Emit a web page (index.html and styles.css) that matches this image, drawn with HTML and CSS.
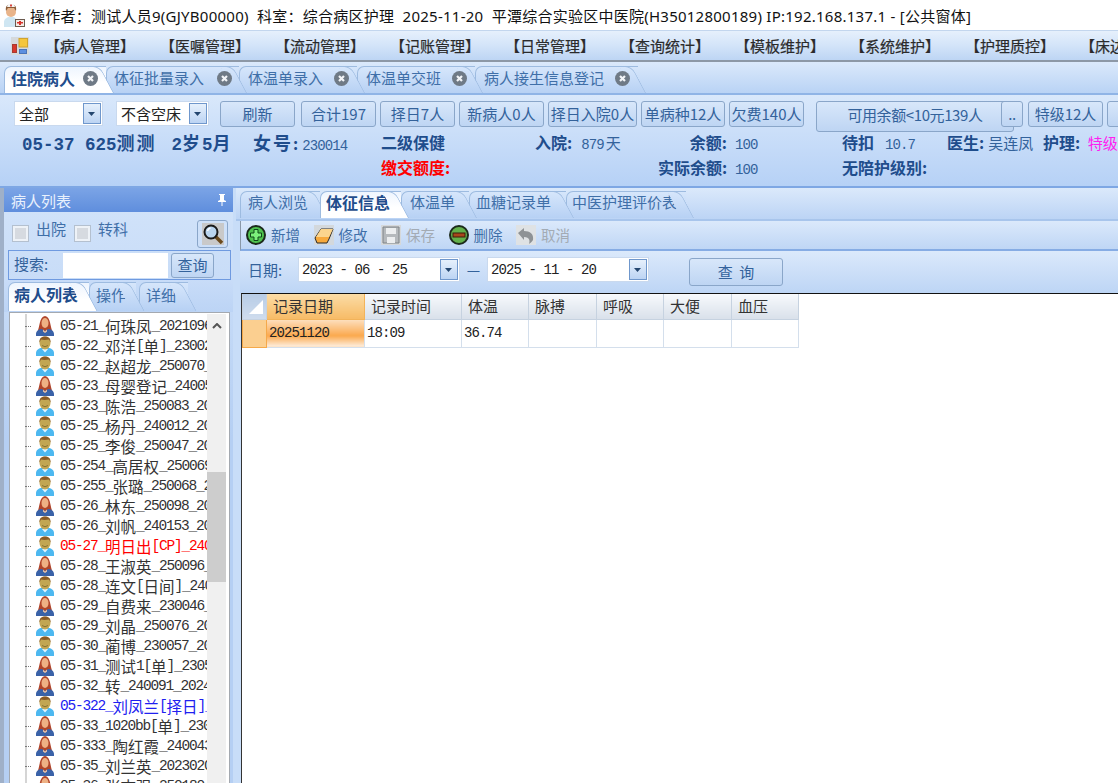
FILE: index.html
```html
<!DOCTYPE html>
<html lang="zh-CN">
<head>
  <meta charset="UTF-8">
  <title>公共窗体</title>
  <link rel="stylesheet" href="styles.css">
</head>
<body>
  <svg class="defs" width="0" height="0">
    <symbol id="male" viewBox="0 0 18 20">
      <path d="M0 20v-3c0-3 3-5 6-5h6c3 0 6 2 6 5v3z" fill="#4db8f0"/>
      <path d="M6 13l3 3.500 3-3.500z" fill="#e6f6ff"/>
      <ellipse cx="9" cy="7" rx="5.500" ry="6.500" fill="#c2a652"/>
      <path d="M3.500 6.500C3 2 6 .5 9 .5s6 1.500 5.500 6L13 3.500C10 4 7 4 5 3.500z" fill="#8a5a24"/>
      <path d="M6 9.500q3 2.500 6 0" stroke="#8a7430" fill="none"/>
    </symbol>
    <symbol id="female" viewBox="0 0 18 20">
      <path d="M1.500 15.500C4 11 3 1 9 0c6 1 5 11 7.500 15.500z" fill="#b0452a"/>
      <ellipse cx="9" cy="7" rx="3.500" ry="5" fill="#eeb184"/>
      <path d="M0 20v-2c0-3 3-5 6-5l3 2 3-2c3 0 6 2 6 5v2z" fill="#3a62a8"/>
      <path d="M7 13.500l2 2 2-2v2l-2 1.500-2-1.500z" fill="#f3c7a4"/>
    </symbol>
    <symbol id="close" viewBox="0 0 15 15">
      <circle cx="7.500" cy="7.500" r="7.500" fill="#6f7a86"/>
      <path d="M5 5l5 5M10 5l-5 5" stroke="#f2f4f7" stroke-width="2.200"/>
    </symbol>
    <symbol id="caret" viewBox="0 0 8 4">
      <path d="M0 0h7L3.500 4z" fill="#24466f"/>
    </symbol>
  </svg>

  <div class="titlebar">
    <svg class="nurse" viewBox="0 0 22 24" width="22" height="24">
      <path d="M1 24v-5c0-3 3-5 6-5h2c3 0 5 2 5 5v5z" fill="#cfe6f2"/>
      <circle cx="8" cy="9" r="5" fill="#e9b48a"/>
      <path d="M3 8C2 3 5 1 8 1s6 2 5 7L11 5H5z" fill="#8a5b36"/>
      <path d="M4 4l1-3h6l1 3z" fill="#f5f5f5"/>
      <rect x="7" y="1.500" width="2" height="2" fill="#d8443c"/>
      <rect x="12" y="16" width="10" height="8" fill="#6b5a4e"/>
      <rect x="13" y="17" width="8" height="6" fill="#f3ece4"/>
      <path d="M16 18h2v1h2v1.500h-2v1.500h-2v-1.500h-2V19h2z" fill="#d8322c"/>
    </svg>
    <span>操作者：测试人员9(GJYB00000)&nbsp; 科室：综合病区护理&nbsp; 2025-11-20&nbsp; 平潭综合实验区中医院(H35012800189) IP:192.168.137.1 - [公共窗体]</span>
  </div>

  <div class="menubar">
    <svg class="menu-logo" viewBox="0 0 18 18" width="18" height="18">
      <rect width="18" height="18" fill="#d5d9dc"/>
      <rect x="8" y="1.500" width="8.500" height="8.500" fill="#f5c63c" stroke="#d0a430"/>
      <rect x="1.500" y="7.500" width="4" height="8" fill="#d8382c" stroke="#a83a30"/>
      <rect x="8.500" y="12.500" width="7" height="4" fill="#5c8fe0" stroke="#4a74b8"/>
    </svg>
    <a class="menu-item">【病人管理】</a>
    <a class="menu-item">【医嘱管理】</a>
    <a class="menu-item">【流动管理】</a>
    <a class="menu-item">【记账管理】</a>
    <a class="menu-item">【日常管理】</a>
    <a class="menu-item">【查询统计】</a>
    <a class="menu-item">【模板维护】</a>
    <a class="menu-item">【系统维护】</a>
    <a class="menu-item">【护理质控】</a>
    <a class="menu-item">【床边</a>
  </div>

  <div class="page-tabs">
    <div class="tab tab-on w1">住院病人<svg class="tab-close"><use href="#close"/></svg></div>
    <div class="tab w2">体征批量录入<svg class="tab-close"><use href="#close"/></svg></div>
    <div class="tab w3">体温单录入<svg class="tab-close"><use href="#close"/></svg></div>
    <div class="tab w3">体温单交班<svg class="tab-close"><use href="#close"/></svg></div>
    <div class="tab">病人接生信息登记<svg class="tab-close"><use href="#close"/></svg></div>
  </div>

  <div class="patient-panel">
    <div class="filter-row">
      <div class="combo combo-a">全部<span class="combo-btn"><svg><use href="#caret"/></svg></span></div>
      <div class="combo combo-b">不含空床<span class="combo-btn"><svg><use href="#caret"/></svg></span></div>
      <button class="btn b-75 first">刷新</button>
      <button class="btn b-75 wide-gap">合计197</button>
      <button class="btn b-75">择日7人</button>
      <button class="btn b-85">新病人0人</button>
      <button class="btn b-89">择日入院0人</button>
      <button class="btn b-84">单病种12人</button>
      <button class="btn b-75">欠费140人</button>
      <button class="btn btn-tall">可用余额&lt;10元139人<span class="btn btn-more">..</span></button>
      <button class="btn b-75 after-more">特级12人</button>
      <button class="btn b-75"></button>
    </div>
    <div class="info-row">
      <div class="c1 big">05-37 625<span class="big-cn">测测</span><span class="age">2<span class="big-cn">岁</span>5<span class="big-cn">月</span></span></div>
      <div class="c1b"><b class="big-cn">女</b><b class="big-cn">号</b><b>:</b><span class="val">230014</span></div>
      <div class="c2"><b>二级保健</b></div>
      <div class="c3"><b>入院</b><b>:</b><span class="val val-3">879<i>天</i></span></div>
      <div class="c4"><b class="lab">余额:</b><span class="val">100</span></div>
      <div class="c5"><b>待扣</b><span class="val gap">10.7</span></div>
      <div class="c6"><b>医生</b><b>:</b><i class="val-cn">吴连凤</i></div>
      <div class="c7"><b>护理</b><b>:</b> <i class="pink">特级护理</i></div>
    </div>
    <div class="info-row">
      <div class="c1"></div>
      <div class="c1b"></div>
      <div class="c2"><b class="red">缴交额度:</b></div>
      <div class="c3"></div>
      <div class="c4"><b class="lab">实际余额:</b><span class="val">100</span></div>
      <div class="c5 c5-wide"><b>无陪护级别:</b></div>
    </div>
  </div>

  <div class="workspace">
    <aside class="sidebar">
      <div class="side-head">病人列表
        <svg viewBox="0 0 10 12" width="10" height="12"><path d="M2 0h6v1H7v5l2 1v1H5.500v4h-1V8H1V7l2-1V1H2z" fill="#fff"/></svg>
      </div>
      <div class="side-checks">
        <span class="check"></span><span class="check-label">出院</span>
        <span class="check check-2"></span><span class="check-label">转科</span>
        <span class="lens-btn">
          <svg viewBox="0 0 22 22" width="22" height="22">
            <rect width="22" height="22" fill="#c9c9c9"/>
            <path d="M13 13l7 7" stroke="#6b4a1c" stroke-width="3.500"/>
            <circle cx="9" cy="9" r="6.500" fill="#b9d4ee" stroke="#1a1a1a" stroke-width="2"/>
            <path d="M5.500 8a4 4 0 0 1 3-3" stroke="#fff" stroke-width="1.500" fill="none"/>
          </svg>
        </span>
      </div>
      <div class="side-search">
        <span class="search-label">搜索:</span>
        <span class="search-input"></span>
        <button class="btn search-btn">查询</button>
      </div>
      <div class="side-tabs">
        <div class="tab tab-on stab-1">病人列表</div>
        <div class="tab stab-2">操作</div>
        <div class="tab stab-2">详细</div>
      </div>
      <div class="tree-box">
        <ul class="tree">
          <li class="node"><svg class="pt"><use href="#female"/></svg>05-21_<span class="cn">何珠凤</span>_2021096</li>
          <li class="node"><svg class="pt"><use href="#male"/></svg>05-22_<span class="cn">邓洋</span>[<span class="cn">单</span>]_23002</li>
          <li class="node"><svg class="pt"><use href="#male"/></svg>05-22_<span class="cn">赵超龙</span>_250070_</li>
          <li class="node"><svg class="pt"><use href="#female"/></svg>05-23_<span class="cn">母婴登记</span>_24005</li>
          <li class="node"><svg class="pt"><use href="#male"/></svg>05-23_<span class="cn">陈浩</span>_250083_20</li>
          <li class="node"><svg class="pt"><use href="#male"/></svg>05-25_<span class="cn">杨丹</span>_240012_20</li>
          <li class="node"><svg class="pt"><use href="#male"/></svg>05-25_<span class="cn">李俊</span>_250047_20</li>
          <li class="node"><svg class="pt"><use href="#male"/></svg>05-254_<span class="cn">高居权</span>_250069</li>
          <li class="node"><svg class="pt"><use href="#male"/></svg>05-255_<span class="cn">张璐</span>_250068_2</li>
          <li class="node"><svg class="pt"><use href="#female"/></svg>05-26_<span class="cn">林东</span>_250098_20</li>
          <li class="node"><svg class="pt"><use href="#male"/></svg>05-26_<span class="cn">刘帆</span>_240153_20</li>
          <li class="node node-red"><svg class="pt"><use href="#male"/></svg>05-27_<span class="cn">明日出</span>[CP]_240</li>
          <li class="node"><svg class="pt"><use href="#female"/></svg>05-28_<span class="cn">王淑英</span>_250096_</li>
          <li class="node"><svg class="pt"><use href="#male"/></svg>05-28_<span class="cn">连文</span>[<span class="cn">日间</span>]_240</li>
          <li class="node"><svg class="pt"><use href="#female"/></svg>05-29_<span class="cn">自费来</span>_230046_</li>
          <li class="node"><svg class="pt"><use href="#male"/></svg>05-29_<span class="cn">刘晶</span>_250076_20</li>
          <li class="node"><svg class="pt"><use href="#male"/></svg>05-30_<span class="cn">蔺博</span>_230057_20</li>
          <li class="node"><svg class="pt"><use href="#female"/></svg>05-31_<span class="cn">测试</span>1[<span class="cn">单</span>]_2305</li>
          <li class="node"><svg class="pt"><use href="#female"/></svg>05-32_<span class="cn">转</span>_240091_2024</li>
          <li class="node node-blue"><svg class="pt"><use href="#male"/></svg>05-322_<span class="cn">刘凤兰</span>[<span class="cn">择日</span>]_</li>
          <li class="node"><svg class="pt"><use href="#female"/></svg>05-33_1020bb[<span class="cn">单</span>]_230</li>
          <li class="node"><svg class="pt"><use href="#female"/></svg>05-333_<span class="cn">陶红霞</span>_240043</li>
          <li class="node"><svg class="pt"><use href="#female"/></svg>05-35_<span class="cn">刘兰英</span>_2023020</li>
          <li class="node"><svg class="pt"><use href="#female"/></svg>05-36_<span class="cn">张志强</span>_250180</li>
        </ul>
        <div class="vscroll">
          <svg class="vscroll-up" viewBox="0 0 10 6" width="10" height="6"><path d="M1 5l4-4 4 4" fill="none" stroke="#555" stroke-width="2"/></svg>
          <div class="vscroll-thumb"></div>
        </div>
      </div>
    </aside>

    <main class="content">
      <div class="sub-tabs">
        <div class="tab st-1">病人浏览</div>
        <div class="tab tab-on st-2">体征信息</div>
        <div class="tab st-3">体温单</div>
        <div class="tab st-4">血糖记录单</div>
        <div class="tab st-5">中医护理评价表</div>
      </div>

      <div class="toolbar">
        <a class="tool">
          <svg viewBox="0 0 20 20" width="20" height="20">
            <circle cx="10" cy="10" r="9" fill="#4fc24f" stroke="#1c2a1c" stroke-width="2"/>
            <path d="M8 4.500h4V8h3.500v4H12v3.500H8V12H4.500V8H8z" fill="#7cf07c" stroke="#0f4a1a"/>
          </svg>新增</a>
        <a class="tool">
          <svg viewBox="0 0 20 20" width="20" height="20">
            <rect width="20" height="20" fill="#d3d8dc"/>
            <path d="M1 13L7 4h12l-4 10-2 4H3z" fill="#f7a93c" stroke="#2a2a2a"/>
            <path d="M7 4h12l-4 8H2z" fill="#fbd58e"/>
          </svg>修改</a>
        <a class="tool tool-off">
          <svg viewBox="0 0 20 20" width="20" height="20">
            <rect width="20" height="20" fill="#d5d8da"/>
            <path d="M2 2h16v16H2z" fill="#b5b9bc" stroke="#7f8386"/>
            <rect x="5" y="3" width="10" height="6" fill="#eceeef"/>
            <rect x="6" y="12" width="8" height="6" fill="#eceeef"/>
          </svg>保存</a>
        <a class="tool">
          <svg viewBox="0 0 20 20" width="20" height="20">
            <circle cx="10" cy="10" r="9" fill="#62b04a" stroke="#1c2a1c" stroke-width="2"/>
            <rect x="4" y="8" width="12" height="4" fill="#a8461c" stroke="#3c1c08"/>
          </svg>删除</a>
        <a class="tool tool-off">
          <svg viewBox="0 0 20 20" width="20" height="20">
            <rect width="20" height="20" fill="#dfe2e4"/>
            <path d="M2 8l6-5v3c6 0 10 3 9 9-1 2-3 3-4 4 1-3 1-7-5-7v3z" fill="#8e9295"/>
          </svg>取消</a>
      </div>

      <div class="date-row">
        <span class="date-label">日期:</span>
        <div class="combo date-box">2023 - 06 - 25<span class="combo-btn"><svg><use href="#caret"/></svg></span></div>
        <span class="date-dash">—</span>
        <div class="combo date-box">2025 - 11 - 20<span class="combo-btn"><svg><use href="#caret"/></svg></span></div>
        <button class="btn query-btn">查 询</button>
      </div>

      <div class="grid-area">
        <table class="grid">
          <thead>
            <tr>
              <th class="corner"><svg viewBox="0 0 24 24" width="24" height="24"><path d="M20 6v14H6z" fill="#fff"/></svg></th>
              <th class="w98 th-on">记录日期</th>
              <th class="w97">记录时间</th>
              <th class="w67">体温</th>
              <th class="w68">脉搏</th>
              <th class="w67">呼吸</th>
              <th class="w68">大便</th>
              <th class="w67">血压</th>
            </tr>
          </thead>
          <tbody>
            <tr>
              <td class="row-head"></td>
              <td class="td-on">20251120</td>
              <td>18:09</td>
              <td>36.74</td>
              <td></td>
              <td></td>
              <td></td>
              <td></td>
            </tr>
          </tbody>
        </table>
      </div>
    </main>
  </div>
</body>
</html>
```

FILE: styles.css
```css
* {
  box-sizing: border-box;
}

html, body {
  margin: 0;
  height: 100%;
}

body {
  width: 1118px;
  height: 783px;
  overflow: hidden;
  display: flex;
  flex-direction: column;
  font-family: "Noto Sans CJK SC", sans-serif;
  background-color: #c8ddf8;
}

.defs {
  position: absolute;
}

/* title and menu */
.titlebar {
  height: 30px;
  flex: none;
  display: flex;
  align-items: center;
  padding-left: 3px;
  background-color: #fff;
  color: #111;
  font-family: "Noto Sans", "Noto Sans CJK SC", sans-serif;
  font-size: 15px;
  letter-spacing: 0.250px;
  white-space: nowrap;
}

.nurse {
  margin-right: 5px;
  flex: none;
}

.menubar {
  height: 32px;
  flex: none;
  display: flex;
  align-items: center;
  padding-left: 11px;
  background: linear-gradient(#e6f0fc, #d3e4f9 50%, #bdd5f4);
  border-top: 1px solid #c3d6ee;
  border-bottom: 2px solid #8d98a6;
  white-space: nowrap;
  overflow: hidden;
}

.menu-logo {
  flex: none;
  margin-right: 16px;
}

.menu-item {
  flex: none;
  width: 115px;
  font-size: 15px;
  color: #2a2a2a;
  -webkit-text-stroke: 0.2px #2a2a2a;
}

/* tabs, shared by all three strips */
.page-tabs {
  height: 33px;
  flex: none;
  display: flex;
  align-items: flex-end;
  padding-left: 4px;
  background: linear-gradient(#dbe9fb, #b9d3f5);
  border-bottom: 2px solid #8fb4e6;
}

.tab {
  position: relative;
  flex: none;
  height: 27px;
  display: flex;
  align-items: center;
  padding: 0 8px 5px;
  font-size: 15px;
  color: #3f6fa8;
  white-space: nowrap;
  background: linear-gradient(#d6e6fb, #b7d1f4);
  border: 1px solid #9dbbe0;
  border-bottom: none;
  border-right: none;
  border-radius: 7px 0 0 0;
}

.tab::after {
  content: "";
  position: absolute;
  top: -1px;
  right: -1px;
  bottom: 0;
  width: 12px;
  background: linear-gradient(#d6e6fb, #b7d1f4);
  border: 1px solid #9dbbe0;
  border-width: 1px 1px 0 0;
  border-radius: 0 7px 0 0;
  transform: skewX(28deg);
  z-index: 1;
}

.page-tabs, .side-tabs, .sub-tabs {
  position: relative;
  z-index: 0;
}

.tab-on {
  z-index: 2;
  font-size: 16px;
  font-weight: bold;
  color: #1f4d8c;
  background: linear-gradient(#eef5fe, #fff 60%);
}

.tab-on::after {
  background: linear-gradient(#eef5fe, #fff 60%);
  border-bottom: none;
}

.tab-close {
  position: relative;
  top: 1px;
  z-index: 2;
  width: 15px;
  height: 15px;
  margin-left: 11px;
  flex: none;
}

.tab-on .tab-close {
  margin-left: 8px;
}

.w1 { width: 102px; padding-left: 6px; }
.w2 { width: 133px; padding-left: 7px; }
.w2 .tab-close { margin-left: 13px; }
.w3 { width: 118px; padding-left: 8px; }

/* patient info panel */
.patient-panel {
  height: 93px;
  flex: none;
  padding: 6px 0 0 14px;
  background: linear-gradient(#d9e8fb, #b6d1f6);
  border-bottom: 2px solid #7ea7e4;
  overflow: hidden;
}

.filter-row {
  display: flex;
  align-items: flex-start;
  white-space: nowrap;
}

.combo {
  position: relative;
  flex: none;
  height: 25px;
  display: flex;
  align-items: center;
  padding-left: 4px;
  background-color: #fff;
  border: 1px solid #c9d9ee;
  font-size: 15px;
  color: #222;
}

.combo-a { width: 89px; }
.combo-b { width: 93px; margin-left: 13px; }

.combo-btn {
  margin-left: auto;
  margin-right: 1px;
  width: 18px;
  height: 21px;
  flex: none;
  display: flex;
  align-items: center;
  justify-content: center;
  background: linear-gradient(#e6f0fc, #bcd4f3);
  border: 1px solid #6f97cc;
}

.combo-btn svg {
  width: 8px;
  height: 4px;
}

.btn {
  position: relative;
  flex: none;
  height: 26px;
  padding: 0;
  font-family: inherit;
  font-size: 15px;
  line-height: 22px;
  color: #33629b;
  background: linear-gradient(#d8e7fa, #bed5f3);
  border: 1px solid #8aa6c9;
  border-radius: 3px;
  white-space: nowrap;
}

.filter-row .btn + .btn { margin-left: 4px; }
.filter-row .first { margin-left: 11px; }
.filter-row .btn.wide-gap { margin-left: 6px; }
.b-75 { width: 75px; }
.b-84 { width: 84px; }
.b-85 { width: 85px; }
.b-89 { width: 89px; }

.filter-row .btn.btn-tall {
  width: 198px;
  height: 31px;
  margin-left: 12px;
  padding-bottom: 4px;
  line-height: 22px;
  letter-spacing: -0.400px;
  text-align: center;
}

.btn-more {
  position: absolute;
  top: -1px;
  right: -10px;
  width: 22px;
  height: 26px;
  line-height: 24px;
}

.filter-row .btn.after-more {
  margin-left: 14px;
}

.info-row {
  display: flex;
  height: 25px;
  align-items: center;
  margin-left: 8px;
  font-size: 16px;
  color: #1f4d8c;
  white-space: nowrap;
}

.info-row:nth-child(2) {
  margin-top: -3px;
}

.info-row i {
  font-style: normal;
}

.c1 { width: 231px; flex: none; }
.c1b { width: 128px; flex: none; }
.c2 { width: 154px; flex: none; }
.c3 { width: 123px; flex: none; }
.c4 { width: 184px; flex: none; }
.c5 { width: 105px; flex: none; }
.c5-wide { width: 200px; }
.c6 { width: 96px; flex: none; }
.c7 { flex: none; }

.big {
  font-family: "Liberation Mono", "Noto Sans CJK SC", monospace;
  font-size: 17.500px;
  font-weight: bold;
}

.big-cn {
  font-family: "Noto Sans CJK SC", sans-serif;
  font-size: 18px;
  letter-spacing: 2px;
}

.age {
  margin-left: 15px;
}

.val {
  margin-left: 4px;
  font-family: "Liberation Mono", "Noto Sans CJK SC", monospace;
  font-size: 14px;
  letter-spacing: -0.900px;
  font-weight: normal;
  color: #33629b;
}

.val-3 {
  margin-left: 9px;
}

.c4 .val {
  margin-left: 8px;
}

.val i {
  font-family: "Noto Sans CJK SC", sans-serif;
  font-size: 15px;
  letter-spacing: 0;
  margin-left: 2px;
}

.info-row .val-cn {
  font-size: 15px;
  color: #33629b;
  margin-left: 4px;
}

.info-row .pink {
  font-size: 15px;
  color: #ff20f0;
  margin-left: 4px;
}

.val.gap {
  margin-left: 11px;
}

.lab {
  display: inline-block;
  width: 69px;
  text-align: right;
}

.red {
  color: #f00;
}

/* main split */
.workspace {
  flex: 1;
  min-height: 0;
  display: flex;
  padding-left: 4px;
  background-color: #c8ddf8;
}

.sidebar {
  width: 229px;
  flex: none;
  display: flex;
  flex-direction: column;
  background: linear-gradient(#d3e4fa, #b5cff3 250px);
  box-shadow: -4px 0 0 #9fb0c8;
}

.side-head {
  height: 24px;
  flex: none;
  display: flex;
  align-items: center;
  justify-content: space-between;
  padding: 0 6px 0 7px;
  font-size: 15px;
  color: #e9f1fd;
  background: linear-gradient(#7ba4e6, #5f8edd);
}

.side-checks {
  height: 38px;
  flex: none;
  display: flex;
  align-items: center;
  padding-left: 9px;
  font-size: 15px;
  color: #3f6fa8;
}

.check {
  width: 15px;
  height: 15px;
  background-color: #d6dae0;
  border: 2px solid #eef2f7;
  outline: 1px solid #b4c0cf;
  margin-right: 8px;
  margin-top: 4px;
}

.check-label {
  margin-bottom: 5px;
}

.check-2 {
  margin-left: 9px;
}

.lens-btn {
  align-self: flex-end;
  margin: 0 5px 2px auto;
  width: 31px;
  height: 28px;
  display: flex;
  align-items: center;
  justify-content: center;
  border: 1px solid #8aa6c9;
  border-radius: 3px;
}

.side-search {
  height: 30px;
  flex: none;
  display: flex;
  align-items: center;
  margin: 0 2px 0 4px;
  padding-left: 5px;
  font-size: 15px;
  color: #33629b;
  border: 1px solid #6f9ae0;
}

.search-label {
  width: 49px;
  flex: none;
  margin-bottom: 3px;
}

.search-input {
  width: 105px;
  height: 25px;
  background-color: #fff;
}

.search-btn {
  width: 43px;
  height: 25px;
  margin-left: 3px;
  line-height: 18px;
}

.side-tabs {
  height: 32px;
  flex: none;
  display: flex;
  align-items: flex-end;
  padding: 0 0 1px 4px;
  background: linear-gradient(#c8dcf8, #bcd4f5);
}

.side-tabs .tab {
  height: 29px;
  padding-bottom: 6px;
}

.stab-1 { width: 81px; padding-left: 5px; }
.side-tabs .stab-1 + .stab-2 { width: 47px; padding-left: 6px; }
.side-tabs .stab-2 + .stab-2 { margin-left: 3px; width: 49px; padding-left: 6px; }

.tree-box {
  flex: 1;
  min-height: 0;
  display: flex;
  margin: 0 3px 0 5px;
  padding: 1px 3px 0 0;
  background-color: #fff;
  border: 1px solid #a4a9b0;
  border-bottom: none;
  overflow: hidden;
}

.tree {
  list-style: none;
  width: 197px;
  flex: none;
  margin: 0;
  padding: 2px 0 0 20px;
  overflow: hidden;
  background: radial-gradient(circle, #777 0.500px, transparent 0.800px) 15px 0 / 2px 2px repeat-y;
}

.node {
  height: 20px;
  display: flex;
  align-items: center;
  white-space: nowrap;
  font-family: "Liberation Mono", "Noto Sans CJK SC", monospace;
  font-size: 14.500px;
  letter-spacing: -1.200px;
  color: #333;
}

.node::before {
  content: "";
  flex: none;
  width: 6px;
  margin-left: -5px;
  margin-right: 5px;
  border-top: 1px dotted #777;
}

.pt {
  width: 18px;
  height: 20px;
  flex: none;
  margin-right: 6px;
}

.cn {
  font-family: "Noto Sans CJK SC", sans-serif;
  font-size: 15.500px;
  letter-spacing: 0;
}

.node-red { color: #f00; }
.node-blue { color: #2020f0; }

.vscroll {
  width: 19px;
  flex: none;
  position: relative;
  background-color: #f0f0f0;
}

.vscroll-up {
  display: block;
  margin: 9px auto 0;
}

.vscroll-thumb {
  margin-top: 143px;
  height: 110px;
  background-color: #cdcdcd;
}

/* right side */
.content {
  flex: 1;
  min-width: 0;
  margin-left: 3px;
  display: flex;
  flex-direction: column;
}

.sub-tabs {
  height: 33px;
  flex: none;
  display: flex;
  align-items: flex-start;
  padding: 3px 0 0 4px;
  background: linear-gradient(#dbe9fb, #bcd4f5);
  border-bottom: 2px solid #a8c5ec;
}

.sub-tabs .tab {
  height: 27px;
  padding-bottom: 7px;
}

.st-1 { width: 80px; padding-left: 7px; }
.st-2 { width: 81px; padding-left: 5px; }
.st-3 { width: 68px; padding-left: 8px; }
.st-4 { width: 97px; padding-left: 6px; }
.st-5 { width: 120px; padding-left: 5px; }

.toolbar {
  height: 30px;
  flex: none;
  display: flex;
  align-items: center;
  margin-left: 4px;
  padding: 0 0 1px 5px;
  background: linear-gradient(#dbe9fb, #bfd6f5);
  border-left: 1px solid #8a98a8;
  border-bottom: 2px solid #86ace4;
  font-size: 14.500px;
  color: #3f6fa8;
}

.tool {
  width: 67.500px;
  flex: none;
  display: flex;
  align-items: center;
  gap: 5px;
}

.tool-off {
  color: #a3abb4;
}

.date-row {
  height: 42px;
  flex: none;
  display: flex;
  align-items: center;
  margin-left: 4px;
  padding: 0 0 5px 8px;
  background: linear-gradient(#dbe9fb, #bdd5f5);
  font-size: 15px;
  color: #33629b;
}

.date-label {
  width: 50px;
}

.date-box {
  width: 162px;
  height: 25px;
  padding-left: 3px;
  font-family: "Liberation Mono", monospace;
  font-size: 14px;
  letter-spacing: -0.900px;
}

.date-dash {
  width: 27px;
  text-align: center;
}

.query-btn {
  width: 94px;
  height: 28px;
  margin: 5px 0 0 40px;
  line-height: 22px;
  word-spacing: 3px;
}

.grid-area {
  flex: 1;
  min-height: 0;
  background-color: #fff;
  border-top: 1px solid #111;
  border-left: 1px solid #333;
  margin-left: 5px;
}

.grid {
  border-collapse: collapse;
  table-layout: fixed;
  width: 556px;
  font-size: 15px;
  color: #333;
}

.grid th {
  height: 25px;
  padding: 0 0 1px 6px;
  font-weight: normal;
  text-align: left;
  background: linear-gradient(#f7f9fc, #d9e0ea);
  border: 1px solid #c6d2e0;
  border-top: none;
}

.grid td {
  height: 28px;
  padding: 0 0 0 2px;
  border: 1px solid #d4dfec;
  font-family: "Liberation Mono", monospace;
  font-size: 14px;
  letter-spacing: -0.900px;
  color: #222;
}

.grid .corner {
  width: 24px;
  padding: 0;
  background: linear-gradient(#b7cce6, #cfdced);
}

.corner svg {
  display: block;
}

.w98 { width: 98px; }
.w97 { width: 97px; }
.w68 { width: 68px; }
.w67 { width: 67px; }

.grid .th-on {
  background: linear-gradient(#fbdca6, #f7bb66);
  border: 1px solid #f2b35a;
  border-top: none;
}

.grid .row-head {
  background-color: #fbcf90;
  border: 1px solid #f5a94a;
}

.grid .td-on {
  background: linear-gradient(#fde0c0, #fba94e 60%, #fdeede);
}
```
